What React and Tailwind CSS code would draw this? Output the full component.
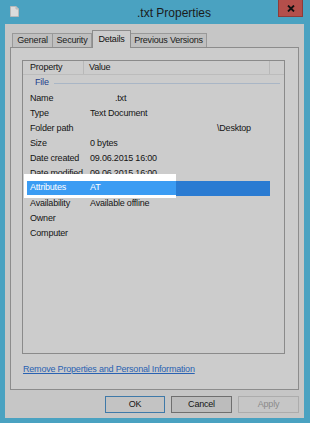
const rows = [
  { name: "Name", value: ".txt", pad: "pl-[25px]" },
  { name: "Type", value: "Text Document" },
  { name: "Folder path", value: "\\Desktop", pad: "pl-[127px]" },
  { name: "Size", value: "0 bytes" },
  { name: "Date created", value: "09.06.2015 16:00" },
  { name: "Date modified", value: "09.06.2015 16:00" },
  { name: "Attributes", value: "AT", selected: true },
  { name: "Availability", value: "Available offline" },
  { name: "Owner", value: "" },
  { name: "Computer", value: "" },
];

const tabs = [
  { label: "General", w: "w-[41px]" },
  { label: "Security", w: "w-[40px]" },
  { label: "Details", w: "w-[39px]", active: true },
  { label: "Previous Versions", w: "w-[77px]" },
];

const DocIcon = () => (
  <svg width="9" height="11" viewBox="0 0 9 11">
    <path d="M0.5 0.5 H6 L8.5 3 V10.5 H0.5 Z" fill="#dcdcdc" stroke="#b9b9b9" />
    <path d="M6 0.5 V3 H8.5" fill="#c4c4c4" stroke="#b9b9b9" />
  </svg>
);

const CloseIcon = () => (
  <svg width="8" height="7" viewBox="0 0 8 7">
    <path d="M1 0.5 L7 6.5 M7 0.5 L1 6.5" stroke="#111" strokeWidth="1.8" />
  </svg>
);

const Row = ({ row }) => {
  if (row.selected) {
    return (
      <div className="relative flex h-[15px] items-center bg-[#2a7bd2] text-white">
        <div className="w-[63px] pl-[3px]">{row.name}</div>
        <div>{row.value}</div>
        <div className="absolute left-[-3px] top-[-7px] h-[24px] w-[152px] overflow-hidden bg-white">
          <div className="mt-[7px] ml-[3px] flex h-[14px] items-center bg-[#3b9cf3] text-white">
            <div className="w-[63px] pl-[3px]">{row.name}</div>
            <div>{row.value}</div>
          </div>
        </div>
      </div>
    );
  }
  return (
    <div className="flex h-[15px] items-center text-[#141414]">
      <div className="w-[63px] pl-[3px] whitespace-nowrap">{row.name}</div>
      <div className={`whitespace-nowrap ${row.pad || ""}`}>{row.value}</div>
    </div>
  );
};

const App = () => {
  return (
    <div
      className="flex h-[423px] w-[310px] flex-col bg-[#4aa2c1] text-[9px] tracking-[-0.2px]"
      style={{ fontFamily: '"Liberation Sans", Arial, sans-serif' }}
    >
      {/* title bar */}
      <div className="flex h-[24px] shrink-0 items-start">
        <div className="ml-[10px] mt-[6px]">
          <DocIcon />
        </div>
        <div className="ml-[118px] mt-[4px] text-[12px] tracking-normal text-[#1b1b1b]">
          .txt Properties
        </div>
        <div className="ml-auto mr-[7px] flex h-[17px] w-[25px] items-center justify-center border border-t-0 border-[#8e3b38] bg-[#b44f4b]">
          <CloseIcon />
        </div>
      </div>

      {/* body */}
      <div className="mb-[5px] ml-[5px] mr-[6px] flex flex-1 flex-col bg-[#c6c6c6]">
        <div className="ml-[7px] mt-[6px] flex h-[17px] items-end">
          {tabs.map((t) =>
            t.active ? (
              <div
                key={t.label}
                className={`relative z-10 -mb-px flex h-[18px] ${t.w} items-start justify-center border border-b-0 border-[#8c8c8c] bg-[#cccccc] pt-[2px] text-[#111]`}
              >
                {t.label}
              </div>
            ) : (
              <div
                key={t.label}
                className={`flex h-[14px] ${t.w} items-center justify-center border border-b-0 border-[#999999] bg-[#bfbfbf] text-[#1a1a1a] -ml-px first:ml-0`}
              >
                {t.label}
              </div>
            )
          )}
        </div>

        <div className="mx-[5px] flex h-[343px] flex-col border border-[#8c8c8c] bg-[#cccccc]">
          <div className="ml-[11px] mr-[13px] mt-[12px] h-[294px] border border-[#8a8a8a] bg-[#cccccc]">
            <div className="flex h-[14px] items-center border-b border-[#bcbcbc] text-[#141414]">
              <div className="h-full w-[61px] border-r border-[#b8b8b8] pl-[7px] leading-[13px]">
                Property
              </div>
              <div className="h-full w-[186px] border-r border-[#b8b8b8] pl-[5px] leading-[13px]">
                Value
              </div>
            </div>
            <div className="flex h-[16px] items-center">
              <span className="ml-[12px] text-[#233f8c]">File</span>
              <div className="ml-[5px] mr-[4px] h-px flex-1 bg-[#a9b6c6]" />
            </div>
            <div className="ml-[4px] w-[243px]">
              {rows.map((r) => (
                <Row key={r.name} row={r} />
              ))}
            </div>
          </div>
          <div className="ml-[12px] mt-[9px]">
            <span className="text-[#2a62b2] underline">
              Remove Properties and Personal Information
            </span>
          </div>
        </div>

        <div className="mr-[5px] mt-[6px] flex justify-end gap-[6px]">
          <div className="flex h-[17px] w-[60px] items-center justify-center border border-[#3f79a8] bg-[#c3c3c3] text-[#141414]">
            OK
          </div>
          <div className="flex h-[17px] w-[61px] items-center justify-center border border-[#6f6f6f] bg-[#bcbcbc] text-[#141414]">
            Cancel
          </div>
          <div className="flex h-[17px] w-[61px] items-center justify-center border border-[#acacac] bg-[#c6c6c6] text-[#8a8a8a]">
            Apply
          </div>
        </div>
      </div>
    </div>
  );
};

export default App;
